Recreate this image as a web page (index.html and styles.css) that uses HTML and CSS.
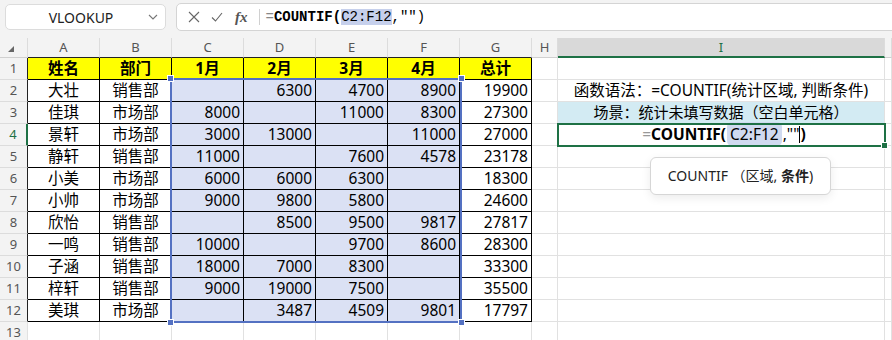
FILE: index.html
```html
<!DOCTYPE html>
<html lang="zh-CN">
<head>
  <meta charset="UTF-8">
  <meta name="viewport" content="width=device-width, initial-scale=1.0">
  <title>COUNTIF 空白单元格</title>
  <link rel="stylesheet" href="styles.css">
</head>
<body>
  <div class="topbar">
    <div class="namebox">
      <span class="name">VLOOKUP</span>
      <svg class="chev" width="10" height="6" viewBox="0 0 10 6"><path d="M1 1 L5 5 L9 1" fill="none" stroke="#777" stroke-width="1.1"/></svg>
    </div>
    <div class="fxbox">
      <svg class="ico" width="12" height="12" viewBox="0 0 12 12"><path d="M1 1 L11 11 M11 1 L1 11" stroke="#666" stroke-width="1.1"/></svg>
      <svg class="ico" width="12" height="12" viewBox="0 0 12 12"><path d="M1 6.5 L4.5 10 L11 2" fill="none" stroke="#666" stroke-width="1.1"/></svg>
      <span class="fx">fx</span>
      <span class="sep"></span>
      <span class="formula"><span class="eq">=</span><b>COUNTIF(</b><span class="ref">C2:F12</span>,&quot;&quot;)</span>
    </div>
  </div>

  <div class="sheet">
    <div class="grid">
      <div class="hd corner"><span class="tri"></span></div>
      <div class="hd dk">A</div><div class="hd dk">B</div><div class="hd dk">C</div><div class="hd dk">D</div>
      <div class="hd dk">E</div><div class="hd dk">F</div><div class="hd dk">G</div>
      <div class="hd">H</div><div class="hd sel">I</div><div class="hd"></div>

      <div class="rn dk">1</div>
      <div class="c b y">姓名</div><div class="c b y">部门</div><div class="c b y">1月</div><div class="c b y">2月</div>
      <div class="c b y">3月</div><div class="c b y">4月</div><div class="c b y">总计</div>
      <div class="c"></div><div class="c"></div><div class="c"></div>

      <div class="rn dk">2</div>
      <div class="c b t">大壮</div><div class="c b t">销售部</div><div class="c b f n"></div><div class="c b f n">6300</div>
      <div class="c b f n">4700</div><div class="c b f n">8900</div><div class="c b n">19900</div>
      <div class="c"></div><div class="c t">函数语法：=COUNTIF(统计区域, 判断条件)</div><div class="c"></div>

      <div class="rn dk">3</div>
      <div class="c b t">佳琪</div><div class="c b t">市场部</div><div class="c b f n">8000</div><div class="c b f n"></div>
      <div class="c b f n">11000</div><div class="c b f n">8300</div><div class="c b n">27300</div>
      <div class="c"></div><div class="c t blue">场景：统计未填写数据（空白单元格）</div><div class="c"></div>

      <div class="rn dk act">4</div>
      <div class="c b t">景轩</div><div class="c b t">市场部</div><div class="c b f n">3000</div><div class="c b f n">13000</div>
      <div class="c b f n"></div><div class="c b f n">11000</div><div class="c b n">27000</div>
      <div class="c"></div>
      <div class="c t edit"><span class="eq">=</span><b>COUNTIF(</b><span class="pill">C2:F12</span>,""<span class="caret"></span><b>)</b></div>
      <div class="c"></div>

      <div class="rn dk">5</div>
      <div class="c b t">静轩</div><div class="c b t">销售部</div><div class="c b f n">11000</div><div class="c b f n"></div>
      <div class="c b f n">7600</div><div class="c b f n">4578</div><div class="c b n">23178</div>
      <div class="c"></div><div class="c"></div><div class="c"></div>

      <div class="rn dk">6</div>
      <div class="c b t">小美</div><div class="c b t">市场部</div><div class="c b f n">6000</div><div class="c b f n">6000</div>
      <div class="c b f n">6300</div><div class="c b f n"></div><div class="c b n">18300</div>
      <div class="c"></div><div class="c"></div><div class="c"></div>

      <div class="rn dk">7</div>
      <div class="c b t">小帅</div><div class="c b t">市场部</div><div class="c b f n">9000</div><div class="c b f n">9800</div>
      <div class="c b f n">5800</div><div class="c b f n"></div><div class="c b n">24600</div>
      <div class="c"></div><div class="c"></div><div class="c"></div>

      <div class="rn dk">8</div>
      <div class="c b t">欣怡</div><div class="c b t">销售部</div><div class="c b f n"></div><div class="c b f n">8500</div>
      <div class="c b f n">9500</div><div class="c b f n">9817</div><div class="c b n">27817</div>
      <div class="c"></div><div class="c"></div><div class="c"></div>

      <div class="rn dk">9</div>
      <div class="c b t">一鸣</div><div class="c b t">销售部</div><div class="c b f n">10000</div><div class="c b f n"></div>
      <div class="c b f n">9700</div><div class="c b f n">8600</div><div class="c b n">28300</div>
      <div class="c"></div><div class="c"></div><div class="c"></div>

      <div class="rn dk">10</div>
      <div class="c b t">子涵</div><div class="c b t">销售部</div><div class="c b f n">18000</div><div class="c b f n">7000</div>
      <div class="c b f n">8300</div><div class="c b f n"></div><div class="c b n">33300</div>
      <div class="c"></div><div class="c"></div><div class="c"></div>

      <div class="rn dk">11</div>
      <div class="c b t">梓轩</div><div class="c b t">销售部</div><div class="c b f n">9000</div><div class="c b f n">19000</div>
      <div class="c b f n">7500</div><div class="c b f n"></div><div class="c b n">35500</div>
      <div class="c"></div><div class="c"></div><div class="c"></div>

      <div class="rn dk">12</div>
      <div class="c b t">美琪</div><div class="c b t">市场部</div><div class="c b f n"></div><div class="c b f n">3487</div>
      <div class="c b f n">4509</div><div class="c b f n">9801</div><div class="c b n">17797</div>
      <div class="c"></div><div class="c"></div><div class="c"></div>

      <div class="rn">13</div>
      <div class="c"></div><div class="c"></div><div class="c"></div><div class="c"></div>
      <div class="c"></div><div class="c"></div><div class="c"></div>
      <div class="c"></div><div class="c"></div><div class="c"></div>
    </div>

    <div class="range">
      <span class="h tl"></span><span class="h tr"></span>
      <span class="h bl"></span><span class="h br"></span>
    </div>
    <div class="active"><span class="fill"></span></div>
    <div class="tip">COUNTIF （区域, <b>条件</b>)</div>
  </div>
</body>
</html>
```

FILE: styles.css
```css
body {
  margin: 0;
  background: #f3f3f3;
  font-family: "Noto Sans", "Noto Sans CJK SC", sans-serif;
  color: #000;
  overflow: hidden;
  width: 892px;
  height: 340px;
}

/* formula bar */
.topbar {
  height: 38px;
  box-sizing: border-box;
  padding: 3px 0 0 5px;
  display: flex;
  align-items: flex-start;
  gap: 10px;
}
.namebox {
  width: 161px;
  height: 26px;
  margin-top: 1px;
  box-sizing: border-box;
  background: #fff;
  border: 1px solid #dcdcdc;
  border-radius: 5px;
  display: flex;
  align-items: center;
  padding: 0 7px 0 0;
}
.name {
  flex: 1;
  text-align: center;
  font-size: 14px;
  color: #222;
  padding-left: 8px;
}
.fxbox {
  flex: 1;
  height: 28px;
  margin-right: -20px;
  box-sizing: border-box;
  background: #fff;
  border: 1px solid #d4d4d4;
  border-radius: 5px;
  display: flex;
  align-items: center;
  padding-left: 11px;
}
.ico {
  margin-right: 11px;
}
.fx {
  font-family: "Liberation Serif", serif;
  font-style: italic;
  font-weight: bold;
  font-size: 15px;
  color: #555;
  margin-left: 1px;
}
.sep {
  width: 1px;
  height: 16px;
  background: #d0d0d0;
  margin: 0 6px 0 11px;
}
.formula {
  font-family: "Liberation Mono", monospace;
  font-size: 14px;
  color: #000;
}
.formula .eq {
  color: #888;
}
.formula .ref {
  background: #c6d0ec;
}

/* sheet */
.sheet {
  position: relative;
  background: #fff;
  height: 302px;
}
.grid {
  display: grid;
  grid-template-columns: 28px repeat(7, 72px) 26px 327px 1fr;
  grid-template-rows: 20px repeat(13, 22px);
}
.grid > div {
  box-sizing: border-box;
  border-right: 1px solid #e1e1e1;
  border-bottom: 1px solid #e1e1e1;
  white-space: nowrap;
  overflow: visible;
}
.hd {
  background: #f3f3f3;
  color: #555;
  font-size: 13px;
  text-align: center;
  line-height: 19px;
  border-right-color: #dcdcdc !important;
  border-bottom-color: #d0d0d0 !important;
}
.hd.dk {
  border-bottom-color: #222 !important;
}
.hd.sel {
  background: #d9d9d9;
  color: #1e7145;
  border-bottom: 2px solid #1e7145 !important;
}
.corner {
  position: relative;
}
.tri {
  position: absolute;
  left: 8px;
  bottom: 5px;
  width: 0;
  height: 0;
  border-left: 6px solid transparent;
  border-bottom: 6px solid #666;
}
.rn {
  background: #f3f3f3;
  color: #555;
  font-size: 13px;
  text-align: center;
  line-height: 21px;
  border-bottom-color: #dcdcdc !important;
}
.rn.dk {
  border-right-color: #222 !important;
}
.rn.act {
  color: #1e7145;
  border-right: 2px solid #1e7145 !important;
}
.c {
  font-size: 15.5px;
  line-height: 21px;
}
.b {
  border-right-color: #000 !important;
  border-bottom-color: #000 !important;
}
.y {
  background: #ffff00;
  font-weight: bold;
  text-align: center;
}
.t {
  text-align: center;
}
.n {
  text-align: right;
  padding-right: 3px;
}
.f {
  background: #dbe1f4;
}
.blue {
  background: #d3ebf3;
  font-size: 15px;
}
.edit {
  font-size: 15.5px;
  padding-left: 6px;
}
.edit .eq {
  color: #999;
}
.pill {
  background: #d0daf0;
  border-radius: 5px;
  padding: 1px 3px;
  margin: 0 1px;
}
.caret {
  display: inline-block;
  width: 1px;
  height: 17px;
  background: #000;
  vertical-align: -3px;
}

/* overlays */
.range {
  position: absolute;
  left: 170px;
  top: 40px;
  width: 292px;
  height: 245px;
  box-sizing: border-box;
  border: 2px solid #5471c2;
}
.h {
  position: absolute;
  width: 5px;
  height: 5px;
  background: #5471c2;
  border: 1px solid #fff;
}
.tl { left: -5px; top: -5px; }
.tr { right: -5px; top: -5px; }
.bl { left: -5px; bottom: -5px; }
.br { right: -5px; bottom: -5px; }
.active {
  position: absolute;
  left: 557px;
  top: 85px;
  width: 329px;
  height: 24px;
  box-sizing: border-box;
  border: 2px solid #1e7145;
}
.fill {
  position: absolute;
  right: -4px;
  bottom: -4px;
  width: 5px;
  height: 5px;
  background: #1e7145;
  border: 1px solid #fff;
}
.tip {
  position: absolute;
  left: 650px;
  top: 119px;
  width: 181px;
  height: 38px;
  box-sizing: border-box;
  background: #fff;
  border: 1px solid #d6d6d6;
  border-radius: 6px;
  box-shadow: 0 3px 10px rgba(0, 0, 0, 0.08);
  font-size: 14px;
  line-height: 36px;
  text-align: center;
  color: #222;
}
```
